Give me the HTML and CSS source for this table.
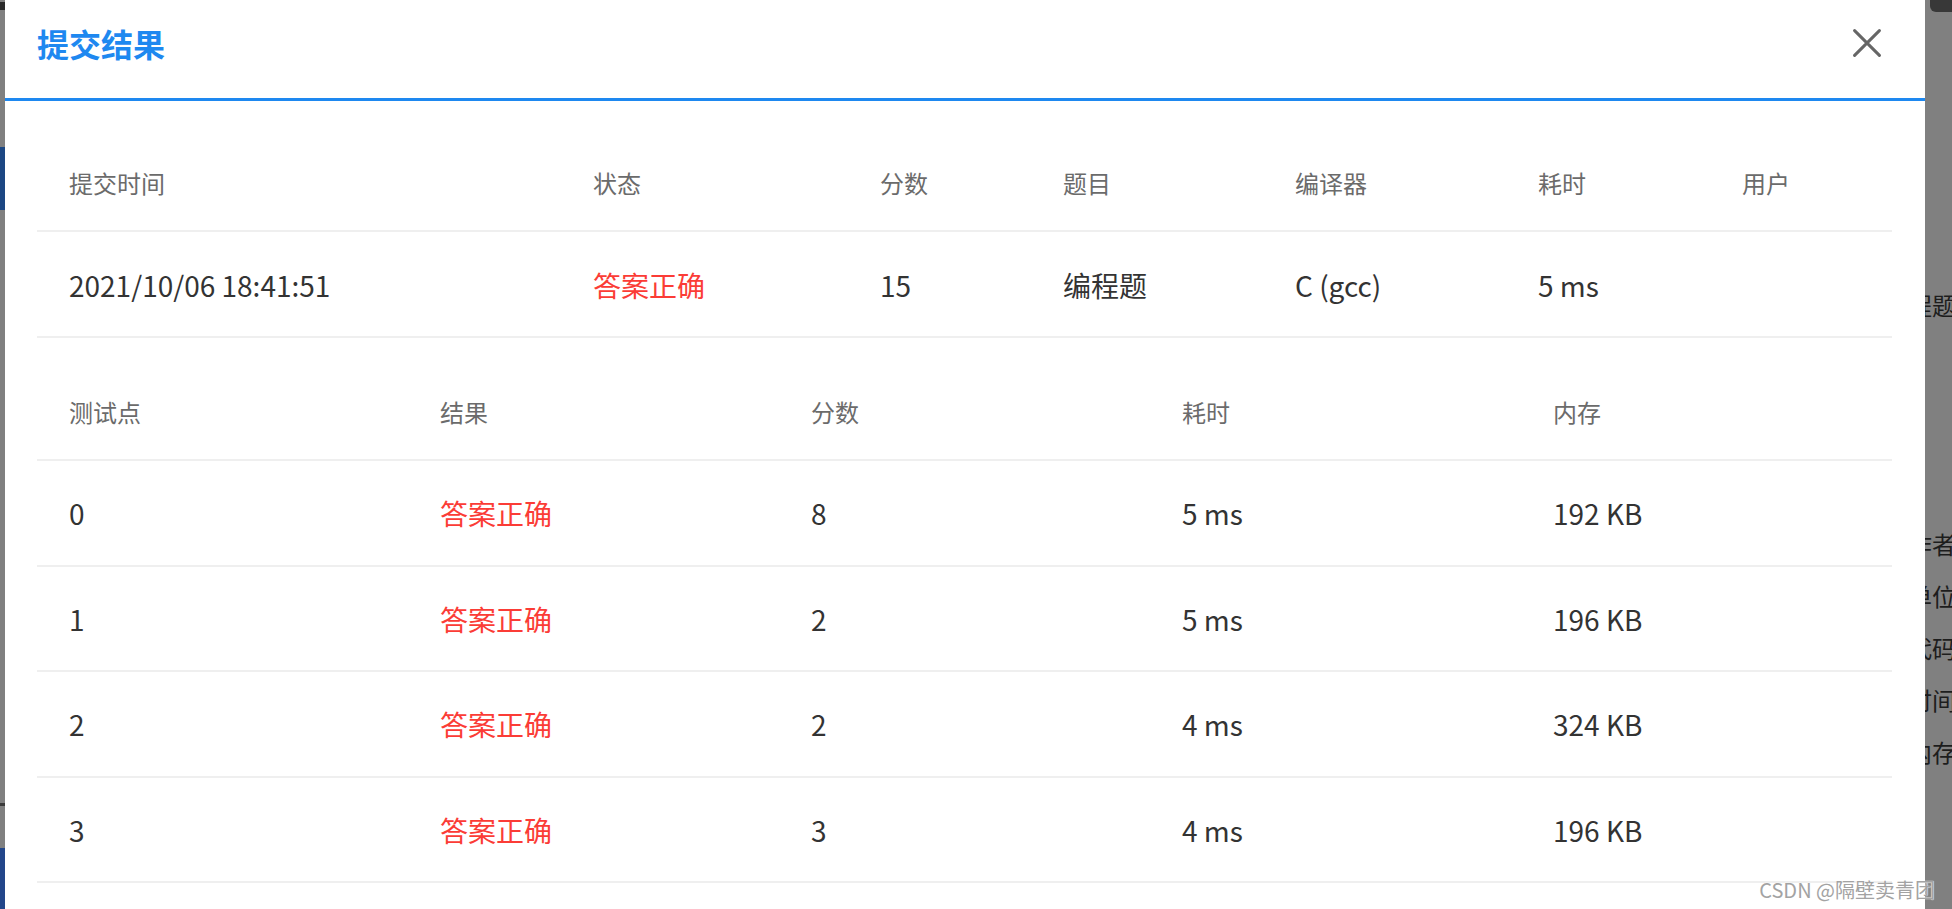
FILE: index.html
```html
<!DOCTYPE html>
<html lang="zh-CN">
<head>
<meta charset="utf-8">
<title>提交结果</title>
<link rel="stylesheet" href="styles.css">
</head>
<body>
<div class="backdrop">
  <div class="side side-left">
    <span class="mark"></span>
    <span class="nav-block"></span>
    <span class="dot"></span>
    <span class="nav-block nav-bottom"></span>
  </div>
  <div class="side side-right">
    <span class="pill"></span>
    <div class="frag frag-title">编程题</div>
    <div class="frag-list">
      <div class="frag">作者</div>
      <div class="frag">单位</div>
      <div class="frag">代码</div>
      <div class="frag">时间</div>
      <div class="frag">内存</div>
    </div>
  </div>
</div>

<div class="modal">
  <header class="modal-head">
    <h2 class="modal-title">提交结果</h2>
    <button class="close" type="button" aria-label="关闭">
      <svg width="28" height="28" viewBox="0 0 28 28" aria-hidden="true">
        <path d="M1.6 1.6 L26.4 26.4 M26.4 1.6 L1.6 26.4" stroke="#666" stroke-width="3" stroke-linecap="round" fill="none"/>
      </svg>
    </button>
  </header>

  <div class="modal-body">
    <table class="grid grid-summary">
      <colgroup>
        <col class="w-time"><col class="w-status"><col class="w-score"><col class="w-problem"><col class="w-compiler"><col class="w-cost"><col class="w-user">
      </colgroup>
      <thead>
        <tr><th>提交时间</th><th>状态</th><th>分数</th><th>题目</th><th>编译器</th><th>耗时</th><th>用户</th></tr>
      </thead>
      <tbody>
        <tr><td>2021/10/06 18:41:51</td><td class="ok">答案正确</td><td>15</td><td>编程题</td><td>C (gcc)</td><td>5 ms</td><td></td></tr>
      </tbody>
    </table>

    <table class="grid grid-cases">
      <thead>
        <tr><th>测试点</th><th>结果</th><th>分数</th><th>耗时</th><th>内存</th></tr>
      </thead>
      <tbody>
        <tr><td>0</td><td class="ok">答案正确</td><td>8</td><td>5 ms</td><td>192 KB</td></tr>
        <tr><td>1</td><td class="ok">答案正确</td><td>2</td><td>5 ms</td><td>196 KB</td></tr>
        <tr><td>2</td><td class="ok">答案正确</td><td>2</td><td>4 ms</td><td>324 KB</td></tr>
        <tr><td>3</td><td class="ok">答案正确</td><td>3</td><td>4 ms</td><td>196 KB</td></tr>
      </tbody>
    </table>
  </div>
</div>

<div class="watermark">CSDN @隔壁卖青团</div>
</body>
</html>
```

FILE: styles.css
```css
* { box-sizing: border-box; }

html, body {
  margin: 0;
  height: 100%;
}

body {
  background: #808080;
  font-family: "Noto Sans CJK SC", "Noto Sans", sans-serif;
  overflow: hidden;
}

/* ---------- dimmed page behind the dialog ---------- */
.backdrop {
  display: flex;
  justify-content: space-between;
  height: 909px;
}

.side-left {
  width: 5px;
  display: flex;
  flex-direction: column;
}

.mark {
  display: block;
  height: 8px;
  margin-top: 2px;
  background: #2a2a2a;
}

.nav-block {
  display: block;
  height: 63px;
  margin-top: 137px;
  background: #1c4783;
}

.dot {
  display: block;
  height: 3px;
  margin-top: 593px;
  background: #3a3a3a;
}

.nav-bottom {
  margin-top: 42px;
  flex: 1;
  background: #22468a;
}

.side-right {
  width: 27px;
  display: flex;
  flex-direction: column;
  align-items: flex-end;
  overflow: hidden;
}

.pill {
  display: block;
  width: 22px;
  height: 12px;
  background: #383838;
  border-bottom-left-radius: 6px;
}

.frag {
  display: flex;
  justify-content: flex-end;
  width: 31px;
  margin-right: -4px;
  white-space: nowrap;
  font-size: 24px;
  line-height: 52px;
  color: #1d1d1d;
}

.frag-title {
  margin-top: 267px;
}

.frag-list {
  margin-top: 187px;
}

/* ---------- dialog ---------- */
.modal {
  position: absolute;
  top: 0;
  bottom: 0;
  left: 5px;
  width: 1920px;
  background: #fff;
  overflow: hidden;
}

.modal-head {
  display: flex;
  align-items: center;
  justify-content: space-between;
  height: 101px;
  padding: 0 44px 12px 32px;
  border-bottom: 3px solid #1e88f0;
}

.modal-title {
  margin: 0;
  font-size: 32px;
  line-height: 40px;
  font-weight: 700;
  color: #1e88f0;
}

.close {
  display: block;
  width: 28px;
  height: 28px;
  padding: 0;
  border: 0;
  background: none;
}

.close svg { display: block; }

.modal-body {
  padding: 35px 33px 0 32px;
}

.grid {
  width: 100%;
  border-collapse: separate;
  border-spacing: 0;
  table-layout: fixed;
}

.grid th {
  text-align: left;
  font-weight: 400;
  font-size: 24px;
  line-height: 34px;
  color: #6b6b6b;
  padding: 30px 0 30px 32px;
  border-bottom: 2px solid #efefef;
}

.grid td {
  font-size: 28px;
  line-height: 40px;
  color: #333;
  white-space: nowrap;
  padding: 33px 0 31px 32px;
  border-bottom: 2px solid #efefef;
}

.grid td.ok { color: #fb3c36; }

.w-time { width: 524px; }
.w-status { width: 287px; }
.w-score { width: 183px; }
.w-problem { width: 232px; }
.w-compiler { width: 243px; }
.w-cost { width: 204px; }
.w-user { width: 182px; }

.grid-cases {
  margin-top: 27px;
}

.grid-cases td {
  padding: 32px 0 31.5px 32px;
}

/* ---------- watermark ---------- */
.watermark {
  position: absolute;
  right: 17px;
  bottom: 8px;
  font-size: 20px;
  line-height: 22px;
  color: #a3a3a3;
  text-shadow: 0 0 1px #fff, 0 0 1px #fff;
  white-space: nowrap;
}
```
